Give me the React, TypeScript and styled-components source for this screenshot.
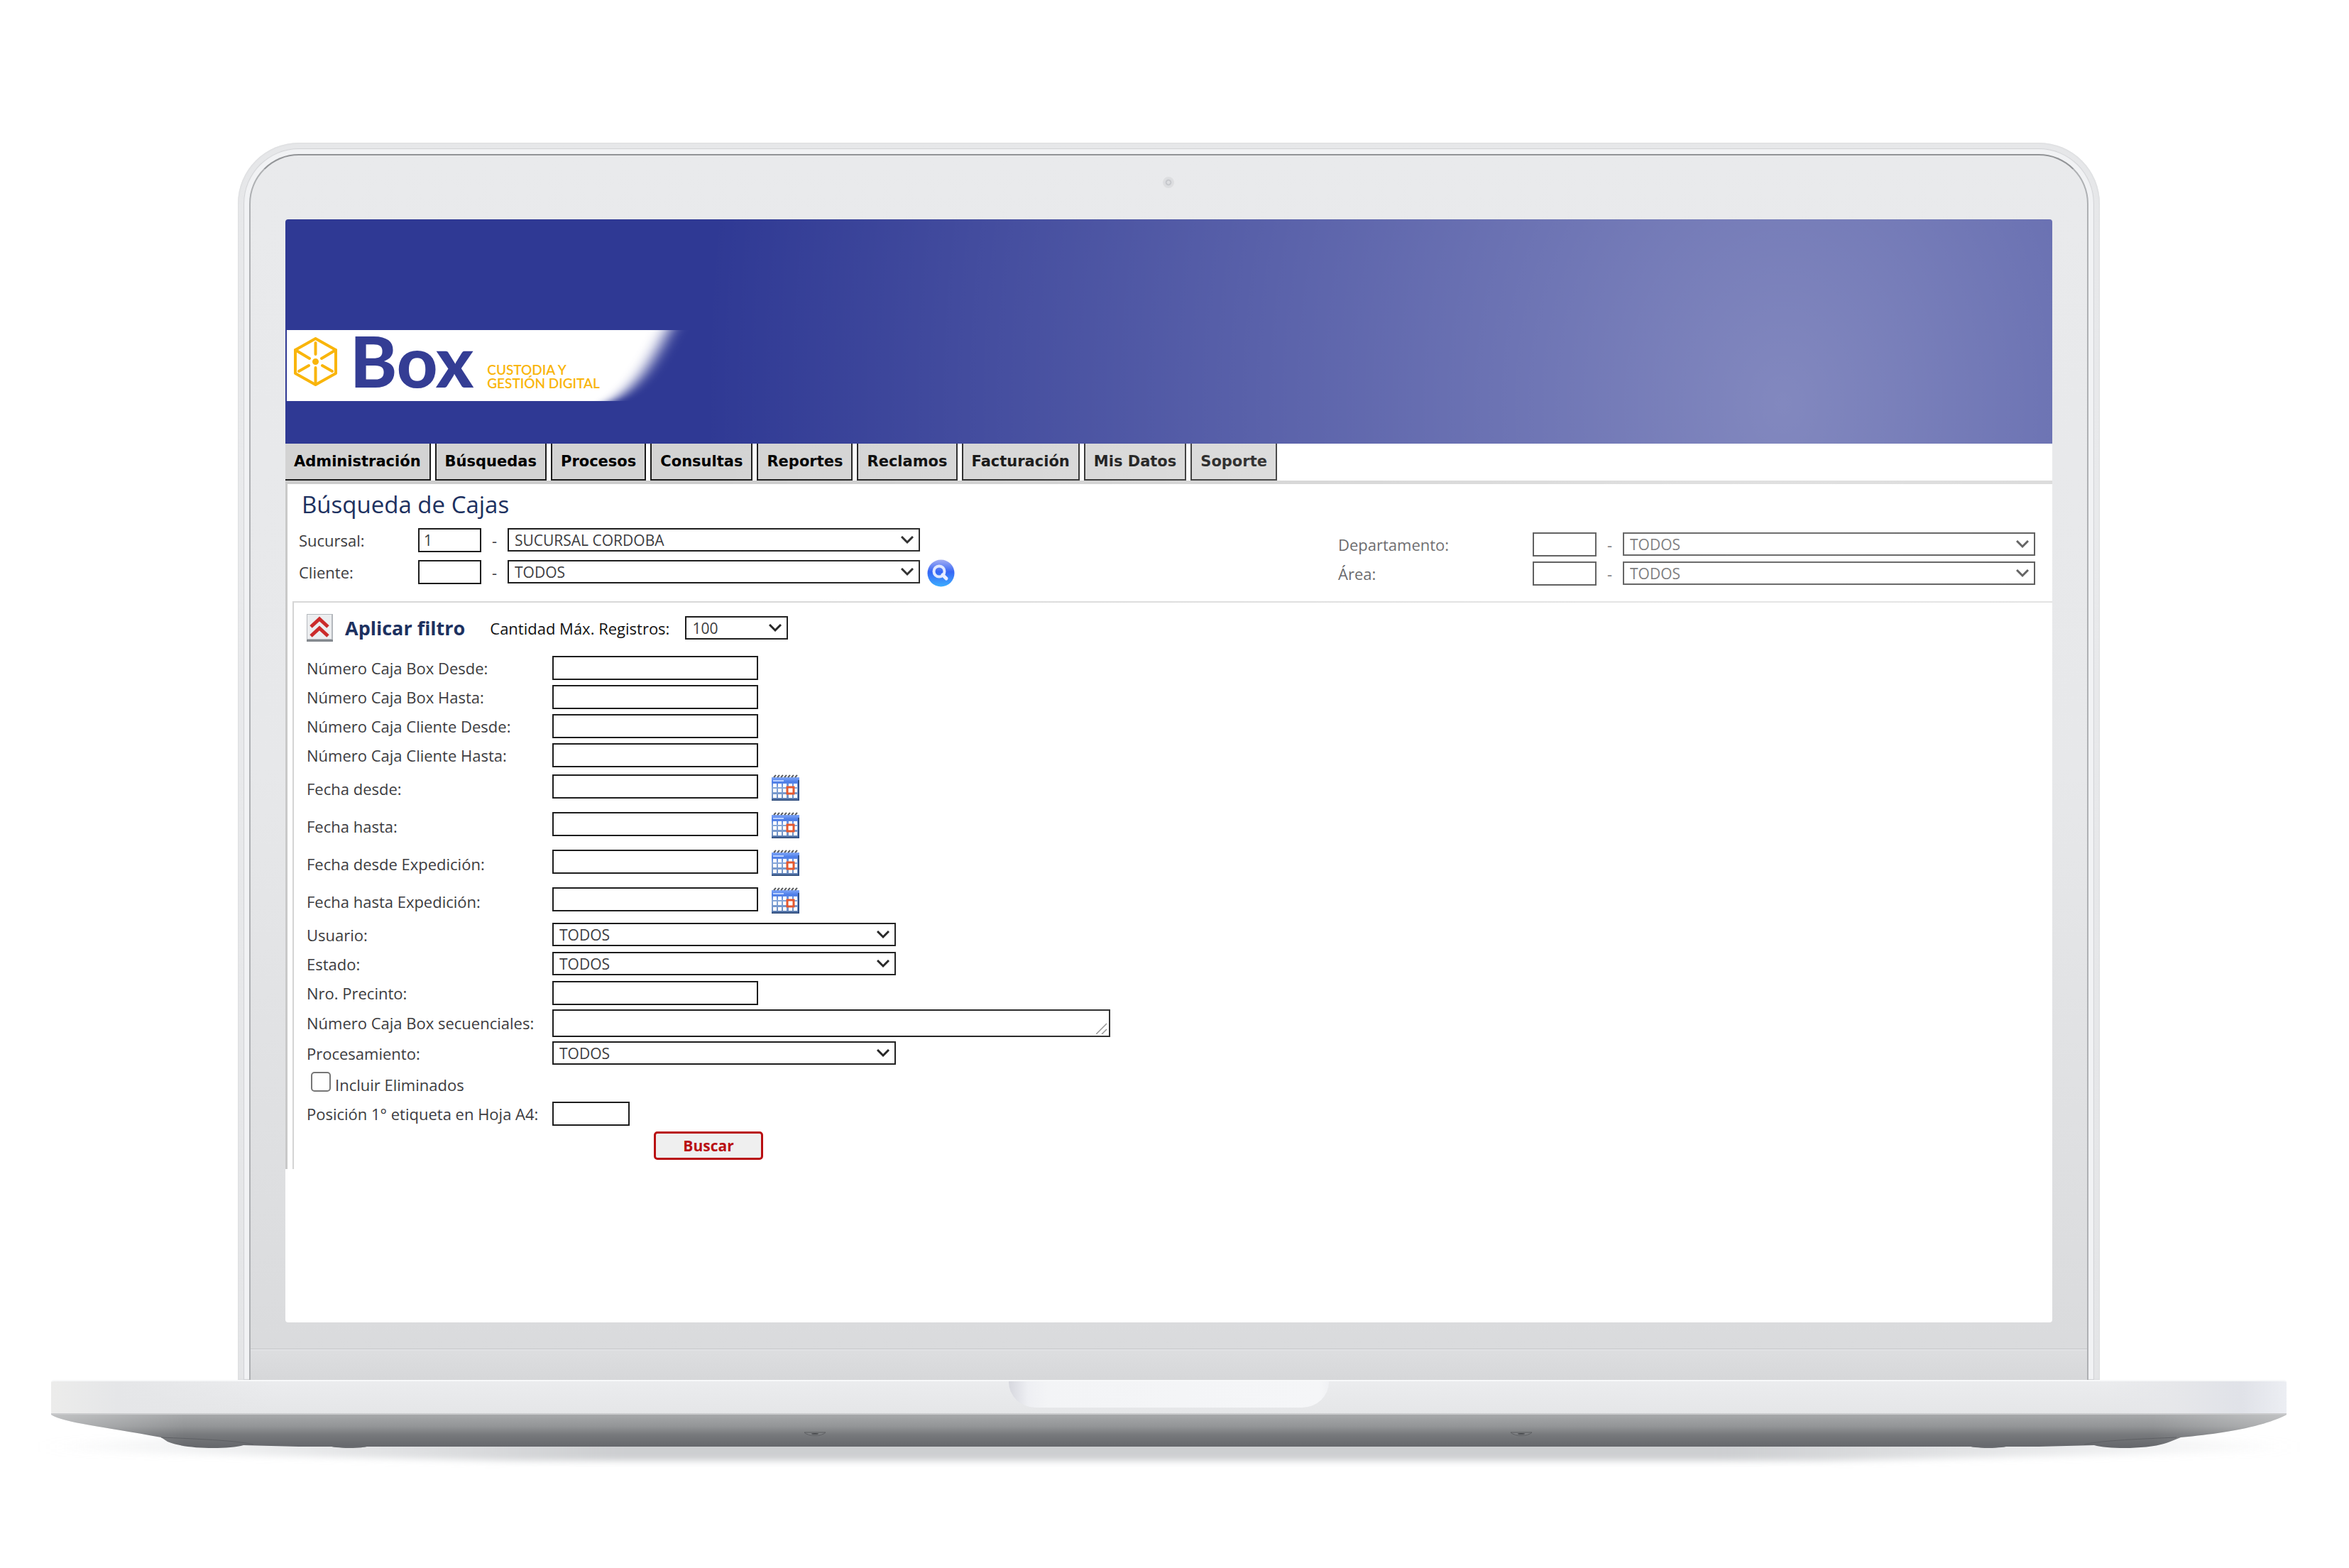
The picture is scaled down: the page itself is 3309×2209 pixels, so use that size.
import React, { useId } from "react";
import styled, { createGlobalStyle } from "styled-components";

const ui = `"Trebuchet MS", "Open Sans", "Noto Sans", sans-serif`;

const GlobalStyle = createGlobalStyle`
  *, *::before, *::after { box-sizing: border-box; }
  body { margin: 0; background: #fff; font-family: ${ui}; font-size: 22px; color: #3c3c40; }
  input, select, textarea, button { font: inherit; color: inherit; margin: 0; }
`;

/* ---------- laptop ---------- */

const Page = styled.main`
  padding: 201px 88px 100px 72px;
`;

const Lid = styled.div`
  margin: 0 263px;
  padding: 8px 8px 0;
  border-radius: 86px 86px 0 0;
  background: linear-gradient(#e6e7e9, #e9eaec 30%, #e4e5e7);
  box-shadow: inset 0 0 2px 1px #dcdddf;
`;

const LidRing = styled.div`
  padding: 8px 8px 0;
  border-radius: 78px 78px 0 0;
  background: #f1f2f4;
  box-shadow: inset 0 0 1px 1px #cfd0d3;
`;

const Bezel = styled.div`
  position: relative;
  padding: 90px 49px 0 49px;
  border: 2px solid #aeb0b3;
  border-top-color: #929497;
  border-bottom: 0;
  border-radius: 70px 70px 0 0;
  background: linear-gradient(#e9eaec, #e7e8ea 50%, #d9dadc);
`;

const Camera = styled.span`
  position: absolute;
  top: 30px;
  left: 50%;
  width: 16px;
  height: 16px;
  margin-left: -9px;
  border-radius: 50%;
  border: 2px solid #dddee0;
  background: radial-gradient(circle, #dcdde0 0 2px, #bfc1c5 3px, #dcdde0 5px);
`;

const Screen = styled.div`
  position: relative;
  aspect-ratio: 2490 / 1555;
  border-radius: 4px;
  overflow: hidden;
  background: #fff;
`;

const Glare = styled.div`
  position: absolute;
  inset: 0;
  pointer-events: none;
  background: radial-gradient(ellipse 1520px 2000px at 2110px 260px, rgba(255, 255, 255, 0.4), rgba(255, 255, 255, 0));
`;

const Hinge = styled.div`
  height: 81px;
  margin: 0 -49px;
  padding-top: 37px;

  &::after {
    content: "";
    display: block;
    height: 44px;
    border-top: 1px solid #c4c6c9;
    box-shadow: inset 0 1px #e9eaec;
    background: linear-gradient(#dddee0, #d6d7d9);
  }
`;

const Deck = styled.div`
  display: flex;
  justify-content: center;
  height: 49px;
  border-top: 2px solid #f8f9fa;
  border-bottom: 2px solid #c9cacc;
  border-radius: 4px 4px 0 0;
  background:
    linear-gradient(90deg, #ececeb, #e5e6e8 3%, rgba(229, 230, 232, 0) 10%, rgba(229, 230, 232, 0) 92%, #e6e7ea 95%, #e0e2e8 98%, #eceef3),
    linear-gradient(#ebecee, #e5e6e8);
`;

const Notch = styled.div`
  width: 451px;
  height: 37px;
  border-radius: 0 0 38px 38px / 0 0 36px 36px;
  background: linear-gradient(90deg, #d6d7de, #eeeff3 6%, #f3f4f6 12%, #f5f6f8 97%, #f0f1f4);
`;

const UndersideSvg = styled.svg`
  display: block;
  width: 100%;
  height: 90px;
  overflow: visible;
`;

function Underside() {
  const shell =
    "M0,0 H3149 C3130,10 3090,24 3000,32 L2985,38 C2960,49 2900,49 2878,43 L2800,45 H349 L271,43 C249,49 189,49 164,38 L155,32 C70,16 20,12 0,0 Z";
  return (
    <UndersideSvg viewBox="0 0 3149 90" preserveAspectRatio="none" aria-hidden="true">
      <defs>
        <linearGradient id="shell" x1="0" y1="0" x2="0" y2="1">
          <stop offset="0" stopColor="#a6a8aa" />
          <stop offset="0.35" stopColor="#939597" />
          <stop offset="0.6" stopColor="#77797c" />
          <stop offset="0.95" stopColor="#66686c" />
        </linearGradient>
        <linearGradient id="edge" x1="0" y1="0" x2="1" y2="0">
          <stop offset="0" stopColor="#fff" stopOpacity="0.3" />
          <stop offset="0.06" stopColor="#fff" stopOpacity="0" />
          <stop offset="0.94" stopColor="#fff" stopOpacity="0" />
          <stop offset="1" stopColor="#fff" stopOpacity="0.3" />
        </linearGradient>
        <linearGradient id="floor" x1="0" y1="0" x2="1" y2="0">
          <stop offset="0" stopColor="#cdcfd1" stopOpacity="0" />
          <stop offset="0.25" stopColor="#cdcfd1" />
          <stop offset="0.75" stopColor="#cdcfd1" />
          <stop offset="1" stopColor="#cdcfd1" stopOpacity="0" />
        </linearGradient>
        <filter id="soft" x="-5%" y="-100%" width="110%" height="300%">
          <feGaussianBlur stdDeviation="20 5" />
        </filter>
      </defs>
      <path d="M0,38 L600,20 H2549 L3149,38 V52 L2500,65 H650 L0,52 Z" fill="url(#floor)" filter="url(#soft)" />
      <ellipse cx="420" cy="44" rx="26" ry="3" fill="#6a6c70" />
      <ellipse cx="2729" cy="44" rx="26" ry="3" fill="#6a6c70" />
      <path d={shell} fill="url(#shell)" />
      <path d={shell} fill="url(#edge)" />
      <path d="M155,32 C200,34 260,36 285,42" fill="none" stroke="#5f6165" />
      <path d="M2994,32 C2949,34 2889,36 2864,42" fill="none" stroke="#5f6165" />
      {[1076, 2071].map((x) => (
        <g key={x}>
          <path d={`M${x - 15},25 H${x + 15} C${x + 9},31 ${x - 9},31 ${x - 15},25 Z`} fill="#808285" stroke="#5c5e61" />
          <ellipse cx={x} cy="27" rx="5" ry="1" fill="#4b4d50" />
        </g>
      ))}
    </UndersideSvg>
  );
}

/* ---------- header ---------- */

const Header = styled.header`
  height: 316px;
  padding: 156px 0 0 2px;
  background: #2f3994;
`;

const Brand = styled.a`
  position: relative;
  display: flex;
  width: 566px;
  height: 100px;
  padding: 0 10px;
  text-decoration: none;
`;

const BrandShape = styled.svg`
  position: absolute;
  inset: 0;
  width: 100%;
  height: 100%;
`;

const BrandMark = styled.svg`
  position: relative;
  width: 61px;
  height: 69px;
  margin-top: 10px;
`;

const BrandName = styled.span`
  position: relative;
  margin: -18px 0 0 18px;
  font: 900 100px/120px Lato, sans-serif;
  color: #343d94;
`;

const BrandLine = styled.span`
  position: relative;
  margin: 46px 0 0 19px;
  font: 600 19px/19px Lato, sans-serif;
  color: #f9b50b;
  white-space: nowrap;
`;

function Logo() {
  return (
    <Brand href="#">
      <BrandShape viewBox="0 0 566 100" preserveAspectRatio="none" aria-hidden="true">
        <filter id="fade" x="-10%" y="-10%" width="120%" height="120%">
          <feGaussianBlur stdDeviation="12 0" />
        </filter>
        <path d="M-80,0 H538 C519,35 498,80 456,100 H-80 Z" fill="#fff" filter="url(#fade)" />
      </BrandShape>
      <BrandMark viewBox="0 0 61 69" fill="none" stroke="#f9b50b" strokeWidth="4" strokeLinecap="round" strokeLinejoin="round" aria-hidden="true">
        <path d="M30.500,2 L59,18 V51 L30.500,67 L2,51 V18 Z" />
        <path d="M30.500,8 V24 M2,18 L22,30 M59,18 L39,30 M30.500,43 V66 M7,48 L21,40 M54,48 L40,40" />
        <circle cx="30.500" cy="34.500" r="2.500" fill="#f9b50b" />
      </BrandMark>
      <BrandName>Box</BrandName>
      <BrandLine>
        CUSTODIA Y
        <br />
        GESTIÓN DIGITAL
      </BrandLine>
    </Brand>
  );
}

/* ---------- navigation ---------- */

const Nav = styled.nav`
  display: flex;
  gap: 6px;
  height: 52px;
`;

const Tab = styled.a`
  display: flex;
  align-items: center;
  padding: 0 12px;
  border: 2px solid #1c1c1c;
  border-top: 0;
  background: #d3d3d3;
  font: 700 21px/26px "DejaVu Sans", Verdana, sans-serif;
  color: #000;
  text-decoration: none;
  white-space: nowrap;

  &:first-child {
    border-left: 0;
  }
`;

/* ---------- form ---------- */

const Content = styled.section`
  border-top: 5px solid #cdcdcd;
  border-left: 3px solid #c9c9c9;
  padding-top: 7px;
`;

const Title = styled.h1`
  margin: 0 0 7px;
  padding-left: 20px;
  font-size: 33px;
  line-height: 44px;
  font-weight: 500;
  color: #1d3160;
`;

const Criteria = styled.div`
  display: flex;
  justify-content: space-between;
  height: 107px;
  padding: 0 24px 0 16px;
`;

const Group = styled.div<{ $muted?: boolean }>`
  display: flex;
  flex-direction: column;
  gap: ${(p) => (p.$muted ? 0 : 4)}px;
  padding-top: ${(p) => (p.$muted ? 6 : 0)}px;
`;

const Line = styled.div`
  display: flex;
  align-items: center;
  height: 41px;
`;

const LineLabel = styled.label<{ $width: number }>`
  width: ${(p) => p.$width}px;
`;

const Dash = styled.span`
  width: 37px;
  text-align: center;
`;

const TextBox = styled.input<{ $width: number }>`
  width: ${(p) => p.$width}px;
  height: 34px;
  padding: 0 6px;
  border: 2px solid #1d1d1d;
  border-radius: 0;
  background: #fff;
  font-size: 21px;
  outline: 0;
`;

const DateBox = styled(TextBox)`
  margin-bottom: 6px;
`;

const SelectWrap = styled.span<{ $width: number }>`
  position: relative;
  display: inline-flex;
  width: ${(p) => p.$width}px;
  height: 33px;

  svg {
    position: absolute;
    right: 9px;
    top: 11px;
    pointer-events: none;
  }
`;

const NativeSelect = styled.select`
  appearance: none;
  width: 100%;
  padding: 0 32px 0 8px;
  border: 2px solid #1d1d1d;
  border-radius: 0;
  background: #fff;
  font-size: 21px;
  line-height: 28px;
`;

function Select({ id, width, value, label }: { id: string; width: number; value: string; label?: string }) {
  return (
    <SelectWrap $width={width}>
      <NativeSelect id={id} aria-label={label} defaultValue={value}>
        <option>{value}</option>
      </NativeSelect>
      <svg width="18" height="12" viewBox="0 0 18 12" fill="none" stroke="#222" strokeWidth="3" aria-hidden="true">
        <path d="M1,1 L9,9 L17,1" />
      </svg>
    </SelectWrap>
  );
}

const IconButton = styled.button`
  display: inline-flex;
  padding: 0;
  border: 0;
  background: none;
  cursor: pointer;
`;

const SearchButton = styled(IconButton)`
  margin: 4px 0 0 10px;
`;

function Lookup({ label, labelWidth, code, value, codeWidth, children }: {
  label: string;
  labelWidth: number;
  code: string;
  value: string;
  codeWidth: number;
  children?: React.ReactNode;
}) {
  const id = useId();
  return (
    <Line>
      <LineLabel htmlFor={id} $width={labelWidth}>{label}</LineLabel>
      <TextBox id={id} $width={codeWidth} defaultValue={code} />
      <Dash>-</Dash>
      <Select id={id + "s"} width={581} value={value} label={label} />
      {children}
    </Line>
  );
}

const Filter = styled.form`
  margin-left: 7px;
  padding: 0 0 9px 18px;
  border-top: 2px solid #d8d8d8;
  border-left: 2px solid #d4d4d4;
`;

const FilterHead = styled.div`
  display: flex;
  align-items: center;
  height: 71px;
`;

const FilterTitle = styled.h2`
  margin: 0 35px 0 17px;
  font-size: 27px;
  line-height: 34px;
  font-weight: 700;
  color: #1d3160;
`;

const CountLabel = styled.label`
  margin-right: 22px;
  color: #111;
`;

const rowHeights = { short: 41, date: 53, tall: 44, action: 49 };

const Row = styled.div<{ $size?: keyof typeof rowHeights }>`
  display: flex;
  align-items: center;
  height: ${(p) => rowHeights[p.$size ?? "short"]}px;
`;

const RowLabel = styled.label`
  width: 346px;
  white-space: nowrap;
`;

const NotesWrap = styled.span`
  position: relative;
  display: inline-flex;
  width: 786px;
  height: 39px;

  svg {
    position: absolute;
    right: 4px;
    bottom: 4px;
    pointer-events: none;
  }
`;

const Notes = styled.textarea`
  width: 100%;
  padding: 2px 6px;
  border: 2px solid #1d1d1d;
  border-radius: 0;
  resize: none;
`;

const CalendarButton = styled(IconButton)`
  margin: 0 0 3px 19px;
`;

const CheckLabel = styled.label`
  display: flex;
  align-items: center;
  gap: 6px;
  padding: 4px 0 0 6px;
`;

const Check = styled.input`
  appearance: none;
  width: 28px;
  height: 28px;
  border: 2px solid #767676;
  border-radius: 5px;
  background: #fff;

  ${CheckLabel} & {
    margin-bottom: 8px;
  }
`;

const Submit = styled.button`
  width: 154px;
  height: 40px;
  margin-left: 489px;
  padding: 0;
  border: 3px solid #b90f12;
  border-radius: 5px;
  background: #efefef;
  color: #b90f12;
  font-size: 21px;
  font-weight: 700;
  line-height: 30px;
`;

function CalendarIcon() {
  return (
    <svg width="39" height="37" viewBox="0 0 39 37" aria-hidden="true">
      <defs>
        <linearGradient id="cal" x1="0" y1="0" x2="0" y2="1">
          <stop offset="0" stopColor="#7fa6f8" />
          <stop offset="0.2" stopColor="#4a7be8" />
          <stop offset="0.45" stopColor="#86a7d8" />
          <stop offset="0.88" stopColor="#6d8fc4" />
          <stop offset="1" stopColor="#23406f" />
        </linearGradient>
      </defs>
      <rect x="0" y="4" width="39" height="33" fill="url(#cal)" />
      <rect x="37" y="8" width="2" height="29" fill="#2f4f86" />
      <rect x="2" y="8" width="15" height="2" fill="#b9d0ff" />
      {[3, 8, 13, 18, 23, 28, 33].map((x) => (
        <path key={x} d={`M${x},4 l3,-3`} stroke="#55585c" strokeWidth="2" />
      ))}
      {[13, 20, 28].map((y) =>
        [2, 9, 16, 24, 31].map((x) => <rect key={`${x}-${y}`} x={x} y={y} width="5" height="5" fill="#fff" />)
      )}
      <rect x="22" y="18" width="9" height="9" fill="#fff" stroke="#e4562c" strokeWidth="3" />
    </svg>
  );
}

function SearchIcon() {
  return (
    <svg width="39" height="39" viewBox="0 0 39 39" aria-hidden="true">
      <defs>
        <linearGradient id="lens" x1="0" y1="0" x2="0" y2="1">
          <stop offset="0" stopColor="#9aa6f2" />
          <stop offset="0.45" stopColor="#2458f4" />
          <stop offset="1" stopColor="#2ba6ff" />
        </linearGradient>
      </defs>
      <circle cx="19.500" cy="19.500" r="19" fill="url(#lens)" />
      <circle cx="17" cy="17" r="7.500" fill="none" stroke="#dfe7ff" strokeWidth="4" />
      <path d="M22,22 L27,27" stroke="#e8edff" strokeWidth="5" strokeLinecap="round" />
    </svg>
  );
}

function CollapseIcon() {
  return (
    <svg width="37" height="39" viewBox="0 0 37 39" aria-hidden="true">
      <rect x="0" y="0" width="37" height="39" fill="#b4b8bd" />
      <rect x="1" y="1" width="34" height="34" fill="#eceef0" />
      <rect x="0" y="36" width="37" height="3" fill="#84898f" />
      <path d="M6,18 L18,7 L30,18 M6,31 L18,20 L30,31" fill="none" stroke="#cb2b2b" strokeWidth="5" />
    </svg>
  );
}

function InputRow({ label, width = 290 }: { label: string; width?: number }) {
  const id = useId();
  return (
    <Row>
      <RowLabel htmlFor={id}>{label}</RowLabel>
      <TextBox id={id} $width={width} />
    </Row>
  );
}

function DateRow({ label }: { label: string }) {
  const id = useId();
  return (
    <Row $size="date">
      <RowLabel htmlFor={id}>{label}</RowLabel>
      <DateBox id={id} $width={290} />
      <CalendarButton type="button" aria-label={label}>
        <CalendarIcon />
      </CalendarButton>
    </Row>
  );
}

function SelectRow({ label }: { label: string }) {
  const id = useId();
  return (
    <Row>
      <RowLabel htmlFor={id}>{label}</RowLabel>
      <Select id={id} width={484} value="TODOS" />
    </Row>
  );
}

const tabs = ["Administración", "Búsquedas", "Procesos", "Consultas", "Reportes", "Reclamos", "Facturación", "Mis Datos", "Soporte"];
const numberFields = ["Número Caja Box Desde:", "Número Caja Box Hasta:", "Número Caja Cliente Desde:", "Número Caja Cliente Hasta:"];
const dateFields = ["Fecha desde:", "Fecha hasta:", "Fecha desde Expedición:", "Fecha hasta Expedición:"];

export default function App() {
  return (
    <Page>
      <GlobalStyle />
      <Lid>
        <LidRing>
          <Bezel>
            <Camera />
            <Screen>
              <Header>
                <Logo />
              </Header>
              <Nav>
                {tabs.map((t) => (
                  <Tab key={t} href="#">{t}</Tab>
                ))}
              </Nav>
              <Content>
                <Title>Búsqueda de Cajas</Title>
                <Criteria>
                  <Group>
                    <Lookup label="Sucursal:" labelWidth={168} codeWidth={89} code="1" value="SUCURSAL CORDOBA" />
                    <Lookup label="Cliente:" labelWidth={168} codeWidth={89} code="" value="TODOS">
                      <SearchButton type="button" aria-label="Buscar cliente">
                        <SearchIcon />
                      </SearchButton>
                    </Lookup>
                  </Group>
                  <Group $muted>
                    <Lookup label="Departamento:" labelWidth={274} codeWidth={90} code="" value="TODOS" />
                    <Lookup label="Área:" labelWidth={274} codeWidth={90} code="" value="TODOS" />
                  </Group>
                </Criteria>
                <Filter onSubmit={(e) => e.preventDefault()}>
                  <FilterHead>
                    <IconButton type="button" aria-label="Contraer filtro">
                      <CollapseIcon />
                    </IconButton>
                    <FilterTitle>Aplicar filtro</FilterTitle>
                    <CountLabel htmlFor="max">Cantidad Máx. Registros:</CountLabel>
                    <Select id="max" width={145} value="100" />
                  </FilterHead>
                  {numberFields.map((l) => <InputRow key={l} label={l} />)}
                  {dateFields.map((l) => <DateRow key={l} label={l} />)}
                  <SelectRow label="Usuario:" />
                  <SelectRow label="Estado:" />
                  <InputRow label="Nro. Precinto:" />
                  <Row $size="tall">
                    <RowLabel htmlFor="seq">Número Caja Box secuenciales:</RowLabel>
                    <NotesWrap>
                      <Notes id="seq" />
                      <svg width="16" height="16" viewBox="0 0 16 16" stroke="#8a8a8a" strokeWidth="1.500" aria-hidden="true">
                        <path d="M0,16 L15,1 M8,16 L15,9" />
                      </svg>
                    </NotesWrap>
                  </Row>
                  <SelectRow label="Procesamiento:" />
                  <Row $size="tall">
                    <CheckLabel>
                      <Check type="checkbox" />
                      Incluir Eliminados
                    </CheckLabel>
                  </Row>
                  <InputRow label="Posición 1° etiqueta en Hoja A4:" width={109} />
                  <Row $size="action">
                    <Submit type="submit">Buscar</Submit>
                  </Row>
                </Filter>
              </Content>
              <Glare />
            </Screen>
            <Hinge />
          </Bezel>
        </LidRing>
      </Lid>
      <Deck>
        <Notch />
      </Deck>
      <Underside />
    </Page>
  );
}
